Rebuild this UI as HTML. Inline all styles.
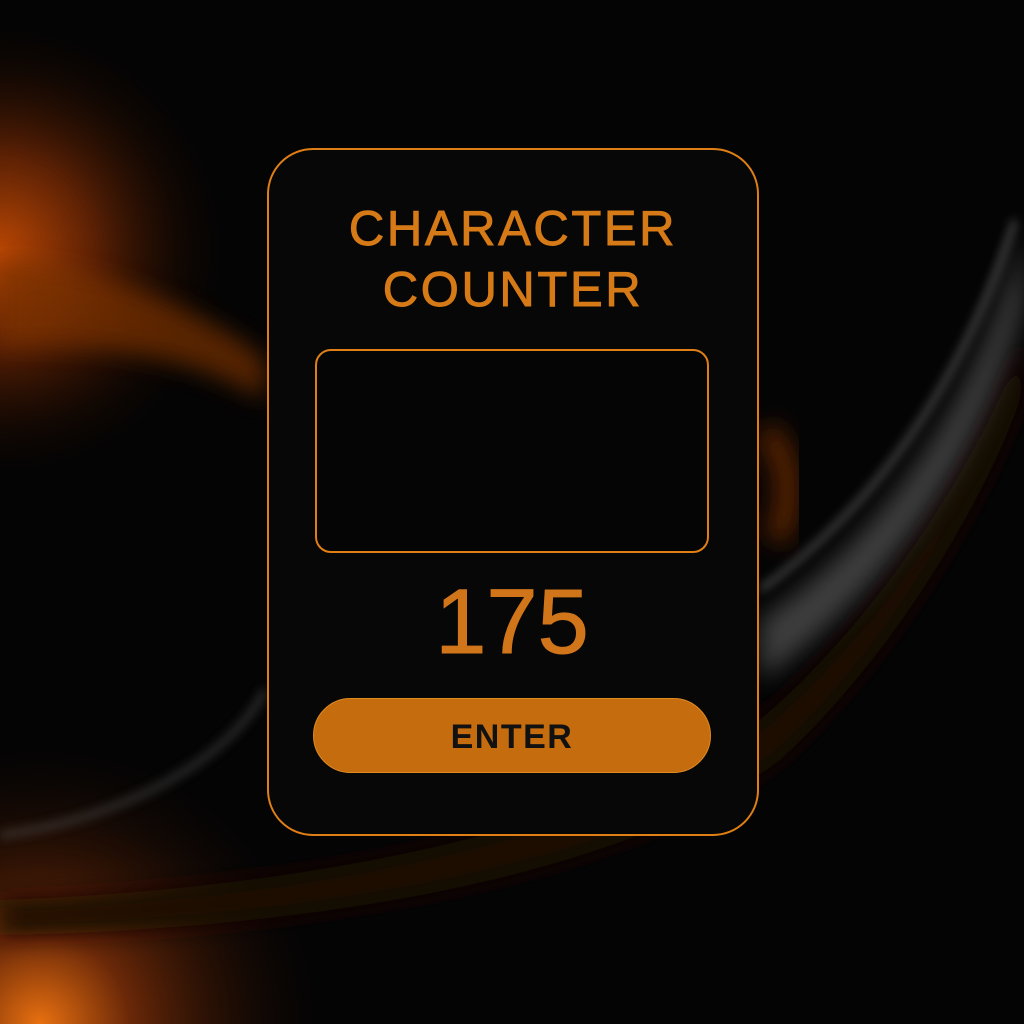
<!DOCTYPE html>
<html><head><style>
html,body{margin:0;padding:0;width:1024px;height:1024px;overflow:hidden;background:#050505;}
.bg{position:absolute;inset:0;}
.card{position:absolute;left:267px;top:148px;width:488px;height:684px;border:2px solid #e07f16;border-radius:46px;background:#070707;box-sizing:content-box;}
.title{position:absolute;left:0;width:100%;text-align:center;font-family:"Liberation Sans",sans-serif;color:#d57a16;font-size:49px;letter-spacing:2.6px;line-height:61px;top:199px;-webkit-text-stroke:0.9px #d57a16;padding-left:2px;box-sizing:border-box;}
.box{position:absolute;left:315px;top:349px;width:390px;height:200px;border:2.5px solid #e07f16;border-radius:16px;background:#050505;}
.num{position:absolute;left:0;width:100%;text-align:center;top:572px;font-family:"Liberation Sans",sans-serif;color:#d0751a;font-size:92px;line-height:100px;-webkit-text-stroke:1px #d0751a;}
.btn{position:absolute;left:313px;top:698px;width:398px;height:75px;border-radius:38px;background:#c56c0f;border:1px solid #e08a20;box-sizing:border-box;text-align:center;font-family:"Liberation Sans",sans-serif;font-weight:bold;font-size:34px;letter-spacing:1.5px;line-height:77px;color:#111;}
</style></head><body>
<svg class="bg" width="1024" height="1024" viewBox="0 0 1024 1024">
<defs>
<filter id="b1" x="-50%" y="-50%" width="200%" height="200%"><feGaussianBlur stdDeviation="30"/></filter>
<filter id="b2" x="-50%" y="-50%" width="200%" height="200%"><feGaussianBlur stdDeviation="12"/></filter>
<filter id="b3" x="-50%" y="-50%" width="200%" height="200%"><feGaussianBlur stdDeviation="5"/></filter>
<radialGradient id="g1" cx="0" cy="250" r="240" gradientUnits="userSpaceOnUse"><stop offset="0" stop-color="#b84604"/><stop offset="0.4" stop-color="#5a2004"/><stop offset="1" stop-color="#000" stop-opacity="0"/></radialGradient>
<radialGradient id="g2" cx="40" cy="1024" r="300" gradientUnits="userSpaceOnUse"><stop offset="0" stop-color="#e87010"/><stop offset="0.3" stop-color="#6a2808"/><stop offset="1" stop-color="#000" stop-opacity="0"/></radialGradient>
</defs>
<rect width="1024" height="1024" fill="#040404"/>
<rect width="1024" height="1024" fill="url(#g1)"/>
<rect width="1024" height="1024" fill="url(#g2)"/>
<path d="M0 260 C120 270 220 320 265 360 L265 400 C200 360 100 340 0 345Z" fill="#7a3006" filter="url(#b2)" opacity="0.7"/>
<path d="M0 835 C120 820 230 760 265 690" stroke="#555" stroke-width="6" fill="none" filter="url(#b3)" opacity="0.6"/>
<path d="M0 900 C300 890 600 830 760 720 C900 600 1000 420 1024 330 L1024 390 C990 490 900 650 780 760 C620 880 300 930 0 935Z" fill="#1e0c04" filter="url(#b2)"/>
<path d="M760 620 C880 540 980 400 1024 230 L1024 300 C985 450 890 590 760 680Z" fill="#777" filter="url(#b2)" opacity="0.5"/>
<path d="M760 590 C870 510 960 390 1015 220" stroke="#bbb" stroke-width="4" fill="none" filter="url(#b3)" opacity="0.55"/>
<path d="M765 430 C790 460 795 500 775 540" stroke="#5a2405" stroke-width="24" fill="none" filter="url(#b2)"/>
</svg>
<div class="card"></div>
<div class="title">CHARACTER<br>COUNTER</div>
<div class="box"></div>
<div class="num">175</div>
<div class="btn">ENTER</div>
</body></html>
